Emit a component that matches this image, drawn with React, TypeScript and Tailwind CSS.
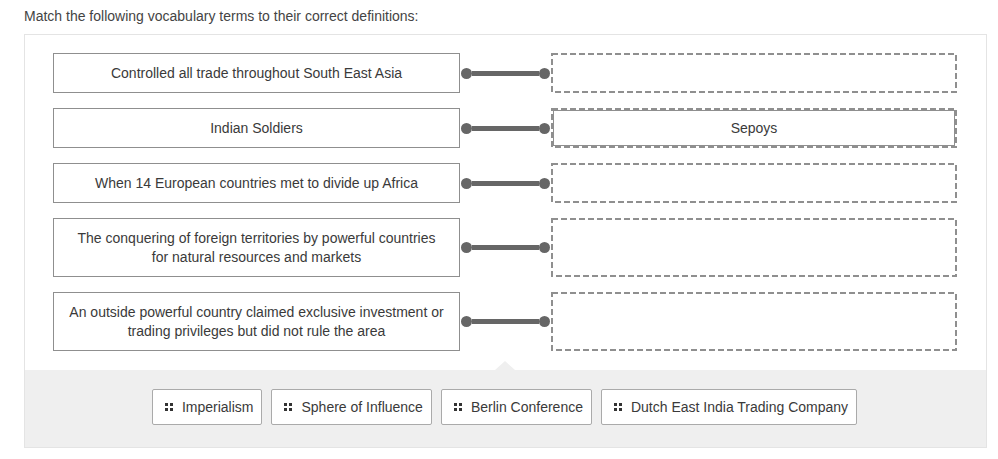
const rows = [
  { term: "Controlled all trade throughout South East Asia", answer: "" },
  { term: "Indian Soldiers", answer: "Sepoys" },
  { term: "When 14 European countries met to divide up Africa", answer: "" },
  {
    term: "The conquering of foreign territories by powerful countries for natural resources and markets",
    answer: "",
    tall: true,
  },
  {
    term: "An outside powerful country claimed exclusive investment or trading privileges but did not rule the area",
    answer: "",
    tall: true,
  },
];

const chips = ["Imperialism", "Sphere of Influence", "Berlin Conference", "Dutch East India Trading Company"];

function Grip() {
  return (
    <span className="grid grid-cols-2 gap-[2px]">
      <span className="w-[3px] h-[3px] bg-[#333]" />
      <span className="w-[3px] h-[3px] bg-[#333]" />
      <span className="w-[3px] h-[3px] bg-[#333]" />
      <span className="w-[3px] h-[3px] bg-[#333]" />
    </span>
  );
}

function Connector() {
  return (
    <div className="w-[91px] flex items-center pl-[1px] pr-[1px] shrink-0">
      <span className="w-[11px] h-[11px] rounded-full bg-[#666]" />
      <span className="flex-1 h-[5px] bg-[#666]" />
      <span className="w-[11px] h-[11px] rounded-full bg-[#666]" />
    </div>
  );
}

// dashed drop zone outline, drawn as an overlay so the dash length matches
function DashedOutline() {
  return (
    <svg className="absolute inset-0 w-full h-full pointer-events-none" preserveAspectRatio="none">
      <rect
        x="1"
        y="1"
        width="calc(100% - 2px)"
        height="calc(100% - 2px)"
        fill="none"
        stroke="#8f8f8f"
        strokeWidth="2"
        strokeDasharray="6 3"
      />
    </svg>
  );
}

export default function App() {
  return (
    <div className="w-[998px] h-[459px] bg-white font-['Liberation_Sans',Arial,sans-serif] text-[14px] text-[#3a3a3a]">
      <p className="pl-[24px] pt-[6px] h-[34px] leading-[20px] text-[#444]">
        Match the following vocabulary terms to their correct definitions:
      </p>
      <div className="ml-[24px] w-[963px] h-[414px] border border-[#e4e4e4] flex flex-col">
        <div className="relative flex-1 px-[28px] pt-[18px] pb-[18px] flex flex-col gap-[15px]">
          {rows.map((r, i) => (
            <div key={i} className={`flex ${r.tall ? "h-[59px]" : "h-[40px]"}`}>
              <div className="w-[407px] border border-[#8f8f8f] flex items-center justify-center text-center px-[15px] leading-[19px]">
                {r.term}
              </div>
              <Connector />
              <div className="relative w-[406px] p-[2px] flex">
                <DashedOutline />
                {r.answer ? (
                  <div className="flex-1 border border-[#8f8f8f] flex items-center justify-center">
                    {r.answer}
                  </div>
                ) : null}
              </div>
            </div>
          ))}
          <span className="absolute left-[470px] bottom-0 w-0 h-0 border-l-[10px] border-r-[10px] border-b-[9px] border-l-transparent border-r-transparent border-b-[#efefef]" />
        </div>
        <div className="h-[77px] bg-[#efefef] flex items-start justify-center gap-[9px] pt-[19px] pr-[2px]">
          {chips.map((c) => (
            <div
              key={c}
              className="h-[36px] bg-white border border-[#aaa] rounded-[2px] flex items-center gap-[9px] pl-[12px] pr-[8px]"
            >
              <Grip />
              <span>{c}</span>
            </div>
          ))}
        </div>
      </div>
    </div>
  );
}
